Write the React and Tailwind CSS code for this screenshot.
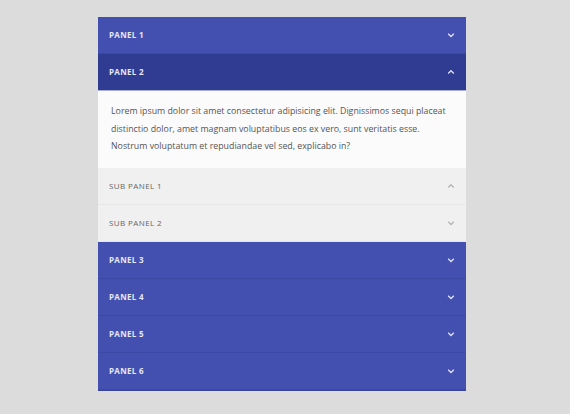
import React, { useState } from "react";

const Chevron = ({ up, className }) => (
  <svg
    width="8"
    height="6"
    viewBox="0 0 8 6"
    className={className}
    fill="none"
    stroke="currentColor"
    strokeWidth="1.3"
  >
    {up ? <path d="M1.2 4.5 L4 1.7 L6.8 4.5" /> : <path d="M1.2 1.7 L4 4.5 L6.8 1.7" />}
  </svg>
);

const Panel = ({ title, active, onClick, children }) => (
  <div>
    <button
      onClick={onClick}
      className={`flex w-full h-[37px] items-center justify-between pl-[11px] pr-[11px] border-b text-left ${
        active
          ? "bg-[#2f3c92] border-[#a9addb]"
          : "bg-[#4350af] border-[#3d49a4]"
      }`}
    >
      <span className="text-[8px] font-bold tracking-[0.3px] text-[#e6e7f5]">
        {title}
      </span>
      <Chevron up={active} className="text-[#dfe1f3]" />
    </button>
    {active && children}
  </div>
);

const SubPanel = ({ title, up }) => (
  <div className="flex h-[37px] items-center justify-between pl-[11px] pr-[11px] bg-[#f0f0f0] border-b border-[#e6e6e6]">
    <span className="text-[8px] tracking-[0.4px] text-[#666]">{title}</span>
    <Chevron up={up} className="text-[#b5b5b5]" />
  </div>
);

export default function App() {
  const [open, setOpen] = useState(2);
  const panels = [1, 2, 3, 4, 5, 6];

  return (
    <div
      className="min-h-screen bg-[#dcdcdc] pt-[17px]"
      style={{ fontFamily: '"Open Sans", "Noto Sans", sans-serif' }}
    >
      <div className="w-[368px] ml-[98px] border-b border-[#3846a0]">
        {panels.map((n) => (
          <Panel
            key={n}
            title={`PANEL ${n}`}
            active={open === n}
            onClick={() => setOpen(open === n ? null : n)}
          >
            <div className="bg-[#fbfbfb] px-[13px] pt-[12px] pb-[12px] text-[8.8px] leading-[17.5px] text-[#555]">
              Lorem ipsum dolor sit amet consectetur adipisicing elit.
              Dignissimos sequi placeat distinctio dolor, amet magnam
              voluptatibus eos ex vero, sunt veritatis esse. Nostrum
              voluptatum et repudiandae vel sed, explicabo in?
            </div>
            <SubPanel title="SUB PANEL 1" up />
            <SubPanel title="SUB PANEL 2" />
          </Panel>
        ))}
      </div>
    </div>
  );
}
